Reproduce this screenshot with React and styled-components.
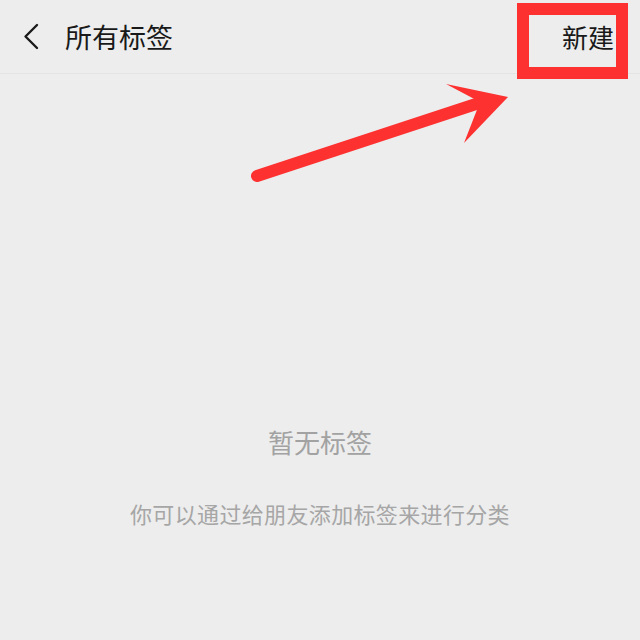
import styled, { createGlobalStyle } from 'styled-components';

const GlobalStyle = createGlobalStyle`
  html, body {
    margin: 0;
    padding: 0;
    background: #ededed;
  }
  body {
    font-family: "Noto Sans CJK SC", "Noto Sans", sans-serif;
  }
`;

const Page = styled.div`
  position: relative;
  width: 640px;
  height: 640px;
  background: #ededed;
  overflow: hidden;
`;

const Header = styled.header`
  height: 74px;
  display: flex;
  align-items: center;
  padding: 0 26px 0 22px;
  border-bottom: 1px solid #e4e4e4;
  box-sizing: border-box;
`;

const BackButton = styled.div`
  width: 18px;
  height: 28px;
  display: flex;
  align-items: center;
  margin-right: 25px;

  svg {
    width: 18px;
    height: 28px;
  }
`;

const Title = styled.h1`
  margin: 0;
  font-size: 27px;
  font-weight: 400;
  color: #191919;
  flex: 1;
`;

const NewButton = styled.div`
  font-size: 26px;
  color: #191919;
`;

const Empty = styled.main`
  display: flex;
  flex-direction: column;
  align-items: center;
  padding-top: 353px;
`;

const EmptyTitle = styled.div`
  font-size: 26px;
  line-height: 30px;
  color: #a2a2a2;
`;

const EmptyHint = styled.div`
  margin-top: 44px;
  font-size: 22px;
  line-height: 24px;
  letter-spacing: 0.35px;
  color: #a6a6a6;
`;

const HighlightBox = styled.div`
  position: absolute;
  left: 517px;
  top: 3px;
  width: 111px;
  height: 76px;
  box-sizing: border-box;
  border: 12px solid #fe3131;
`;

const Arrow = styled.svg`
  position: absolute;
  left: 0;
  top: 0;
  width: 640px;
  height: 640px;
  pointer-events: none;
`;

export default function App() {
  return (
    <Page>
      <GlobalStyle />
      <Header>
        <BackButton>
          <svg viewBox="0 0 18 28" fill="none">
            <path d="M15 2 L3.5 13.5 L15 25" stroke="#1a1a1a" strokeWidth="2.4" strokeLinecap="round" strokeLinejoin="round" />
          </svg>
        </BackButton>
        <Title>所有标签</Title>
        <NewButton>新建</NewButton>
      </Header>
      <Empty>
        <EmptyTitle>暂无标签</EmptyTitle>
        <EmptyHint>你可以通过给朋友添加标签来进行分类</EmptyHint>
      </Empty>
      <HighlightBox />
      <Arrow viewBox="0 0 640 640">
        <line x1="257" y1="176" x2="476" y2="104" stroke="#fe3131" strokeWidth="12" strokeLinecap="round" />
        <path d="M508 97 L446 84 L480 102 L464 143 Z" fill="#fe3131" />
      </Arrow>
    </Page>
  );
}
